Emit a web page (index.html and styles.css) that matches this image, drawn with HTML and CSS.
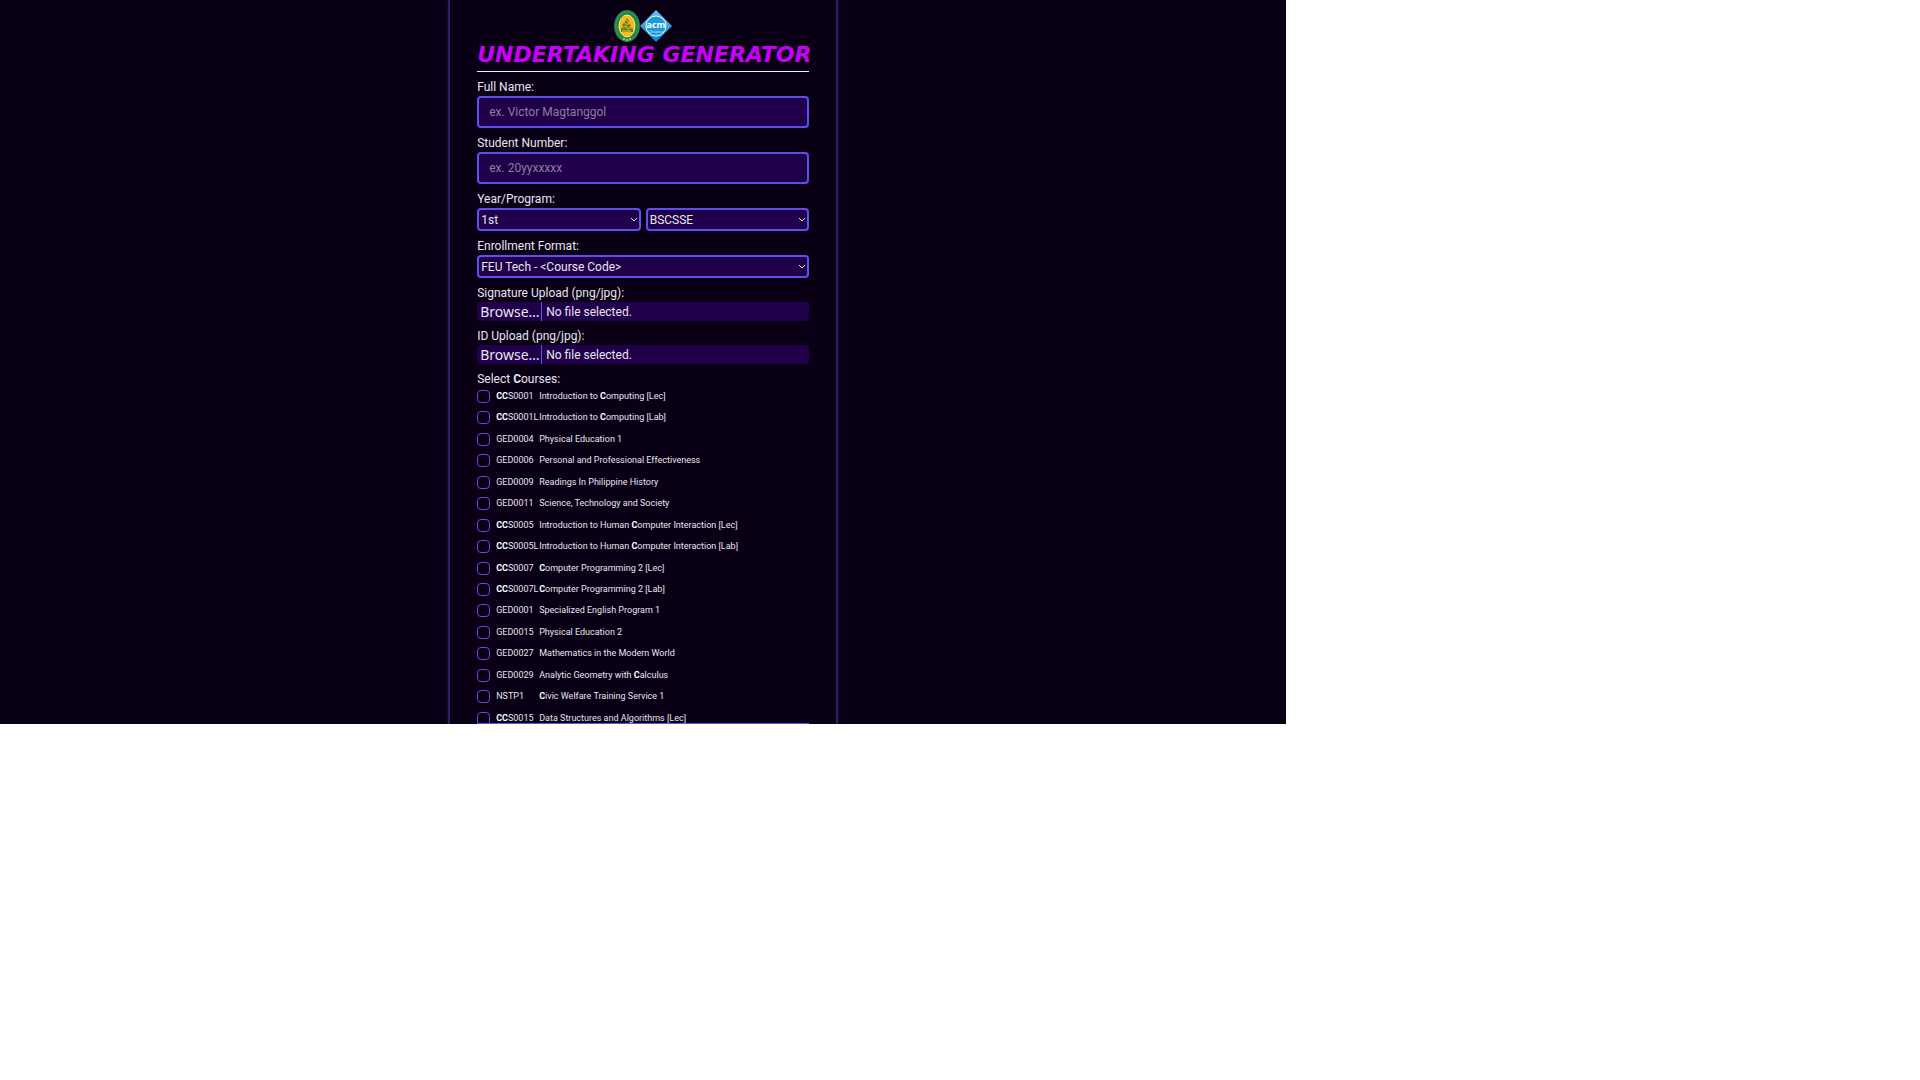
FILE: index.html
```
<!DOCTYPE html>
<html lang="en">
<head>
<meta charset="utf-8">
<title>Undertaking Generator</title>
<link rel="stylesheet" href="styles.css">
</head>
<body>
<div class="screen">
<form class="panel">
  <div class="logos">
    <svg width="26" height="32" viewBox="0 0 26 32" role="img" aria-label="University seal">
      <ellipse cx="13" cy="16" rx="13" ry="16" fill="#13854a"/>
      <ellipse cx="13" cy="16" rx="11" ry="14" fill="none" stroke="#5f9540" stroke-width="2" stroke-dasharray="1 1"/>
      <ellipse cx="13" cy="16" rx="8" ry="11" fill="#fdb913" stroke="#f5e9a0"/>
      <path d="M13 8l2 3-1 2 3 2-1 2 3 2v3H7v-3l2-3-1-2 3-1v-2l1-1z" fill="#69802a"/>
      <path d="M9 18l3-2 2 3 3-2M8 21h9M12 10l2 2M11 14h4" stroke="#fdb913" fill="none"/>
      <path d="M9 29h2M12 30h2M15 29h2" stroke="#e7efcf" stroke-width="1"/>
    </svg>
    <svg width="32" height="32" viewBox="0 0 32 32" role="img" aria-label="ACM Chapter">
      <defs><linearGradient id="sky" x1="0" y1="0" x2="0" y2="1"><stop offset="0" stop-color="#6cc5ea"/><stop offset="1" stop-color="#0784c3"/></linearGradient></defs>
      <path d="M16 0l16 16-16 16L0 16z" fill="url(#sky)"/>
      <circle cx="16" cy="16" r="10" fill="#1c9ad3" stroke="#e4f5fd"/>
      <text x="16" y="18" class="acm">acm</text>
      <text x="16" y="23" class="chapter">Chapter</text>
    </svg>
  </div>
  <h1>UNDERTAKING GENERATOR</h1>

  <label class="caption" for="name">Full Name:</label>
  <input class="box" id="name" type="text" placeholder="ex. Victor Magtanggol">

  <label class="caption" for="number">Student Number:</label>
  <input class="box" id="number" type="text" placeholder="ex. 20yyxxxxx">

  <label class="caption" for="year">Year/Program:</label>
  <div class="pair">
    <div class="select"><select id="year"><option>1st</option></select><svg viewBox="0 0 8 6"><path d="M1 1l3 3 3-3"/></svg></div>
    <div class="select"><select aria-label="Program"><option>BSCSSE</option></select><svg viewBox="0 0 8 6"><path d="M1 1l3 3 3-3"/></svg></div>
  </div>

  <label class="caption" for="format">Enrollment Format:</label>
  <div class="select"><select id="format"><option>FEU Tech - &lt;Course Code&gt;</option></select><svg viewBox="0 0 8 6"><path d="M1 1l3 3 3-3"/></svg></div>

  <label class="caption" for="signature">Signature Upload (png/jpg):</label>
  <label class="file"><input id="signature" type="file"><span class="browse">Browse…</span><span>No file selected.</span></label>

  <label class="caption" for="idcard">ID Upload (png/jpg):</label>
  <label class="file"><input id="idcard" type="file"><span class="browse">Browse…</span><span>No file selected.</span></label>

  <div class="caption">Select <b>C</b>ourses:</div>
  <div class="courses">
    <div class="list">
      <label><input type="checkbox"><span><b>CC</b>S0001</span><span>Introduction to <b>C</b>omputing [Lec]</span></label>
      <label><input type="checkbox"><span><b>CC</b>S0001L</span><span>Introduction to <b>C</b>omputing [Lab]</span></label>
      <label><input type="checkbox"><span>GED0004</span><span>Physical Education 1</span></label>
      <label><input type="checkbox"><span>GED0006</span><span>Personal and Professional Effectiveness</span></label>
      <label><input type="checkbox"><span>GED0009</span><span>Readings In Philippine History</span></label>
      <label><input type="checkbox"><span>GED0011</span><span>Science, Technology and Society</span></label>
      <label><input type="checkbox"><span><b>CC</b>S0005</span><span>Introduction to Human <b>C</b>omputer Interaction [Lec]</span></label>
      <label><input type="checkbox"><span><b>CC</b>S0005L</span><span>Introduction to Human <b>C</b>omputer Interaction [Lab]</span></label>
      <label><input type="checkbox"><span><b>CC</b>S0007</span><span><b>C</b>omputer Programming 2 [Lec]</span></label>
      <label><input type="checkbox"><span><b>CC</b>S0007L</span><span><b>C</b>omputer Programming 2 [Lab]</span></label>
      <label><input type="checkbox"><span>GED0001</span><span>Specialized English Program 1</span></label>
      <label><input type="checkbox"><span>GED0015</span><span>Physical Education 2</span></label>
      <label><input type="checkbox"><span>GED0027</span><span>Mathematics in the Modern World</span></label>
      <label><input type="checkbox"><span>GED0029</span><span>Analytic Geometry with <b>C</b>alculus</span></label>
      <label><input type="checkbox"><span>NSTP1</span><span><b>C</b>ivic Welfare Training Service 1</span></label>
      <label><input type="checkbox"><span><b>CC</b>S0015</span><span>Data Structures and Algorithms [Lec]</span></label>
    </div>
  </div>
</form>
</div>
</body>
</html>
```
FILE: styles.css
```
* { box-sizing: border-box; }
body { margin: 0; background: #fff; }
.screen {
  width: 67vw;
  height: 67vh;
  overflow: hidden;
  background: #090015;
  color: #e8e4ee;
  font: 12px/14px Roboto, sans-serif;
}
.panel {
  display: flex;
  flex-direction: column;
  width: 390px;
  max-width: 100%;
  height: 100%;
  margin: 0 auto;
  padding: 10px 27px 0;
  border: solid #2b2068;
  border-width: 0 2px;
  box-shadow: 0 0 3px #1f1650;
}
.logos { display: flex; justify-content: center; }
.acm { font: bold 9px "Open Sans", sans-serif; fill: #fff; text-anchor: middle; }
.chapter { font: 4px "Open Sans", sans-serif; fill: #d8f0fb; text-anchor: middle; }
h1 {
  margin: 3px 0 8px;
  padding-bottom: 6px;
  border-bottom: 1px solid #f0eaf5;
  color: #c800fa;
  font: italic bold 22px/20px "DejaVu Sans", sans-serif;
  white-space: nowrap;
}
.caption { display: block; flex: none; margin-bottom: 2px; }
.box, select {
  width: 100%;
  border: 2px solid #5f50ee;
  border-radius: 4px;
  background: #20004a;
  color: inherit;
  font: inherit;
}
.box { flex: none; height: 32px; margin-bottom: 8px; padding: 0 10px; }
.box::placeholder { color: #8c7f9e; opacity: 1; }
.pair {
  display: grid;
  grid-template-columns: 1fr 1fr;
  gap: 5px;
  margin-bottom: 8px;
}
.select { position: relative; margin-bottom: 8px; }
.pair .select { margin-bottom: 0; }
select { display: block; height: 23px; padding: 0 2px; appearance: none; }
.select svg {
  position: absolute;
  right: 3px;
  top: 9px;
  width: 8px;
  height: 6px;
  fill: none;
  stroke: #e8e4ee;
  pointer-events: none;
}
.file {
  display: flex;
  flex: none;
  align-items: center;
  gap: 4px;
  height: 19px;
  margin-bottom: 8px;
  border-radius: 4px;
  background: #20004a;
}
.file input { position: absolute; opacity: 0; width: 1px; height: 1px; }
.browse {
  width: 65px;
  padding-left: 3px;
  border-right: 1px solid #5f50ee;
  font: 14px/19px "Noto Sans", sans-serif;
}
.courses {
  flex: 1;
  min-height: 0;
  margin-top: 2px;
  overflow: hidden;
  border-bottom: 1px solid #5f50ee;
}
.list {
  display: flex;
  flex-direction: column;
  justify-content: space-between;
  height: calc(100% + 2px);
}
.list label {
  display: grid;
  grid-template-columns: 19px 43px 1fr;
  align-items: center;
  height: 13px;
  font-size: 9px;
  line-height: 13px;
  white-space: nowrap;
}
.list b { color: #fff; }
.list input {
  width: 13px;
  height: 13px;
  margin: 0;
  appearance: none;
  border: 1px solid #7c3fd6;
  border-radius: 4px;
}
```
